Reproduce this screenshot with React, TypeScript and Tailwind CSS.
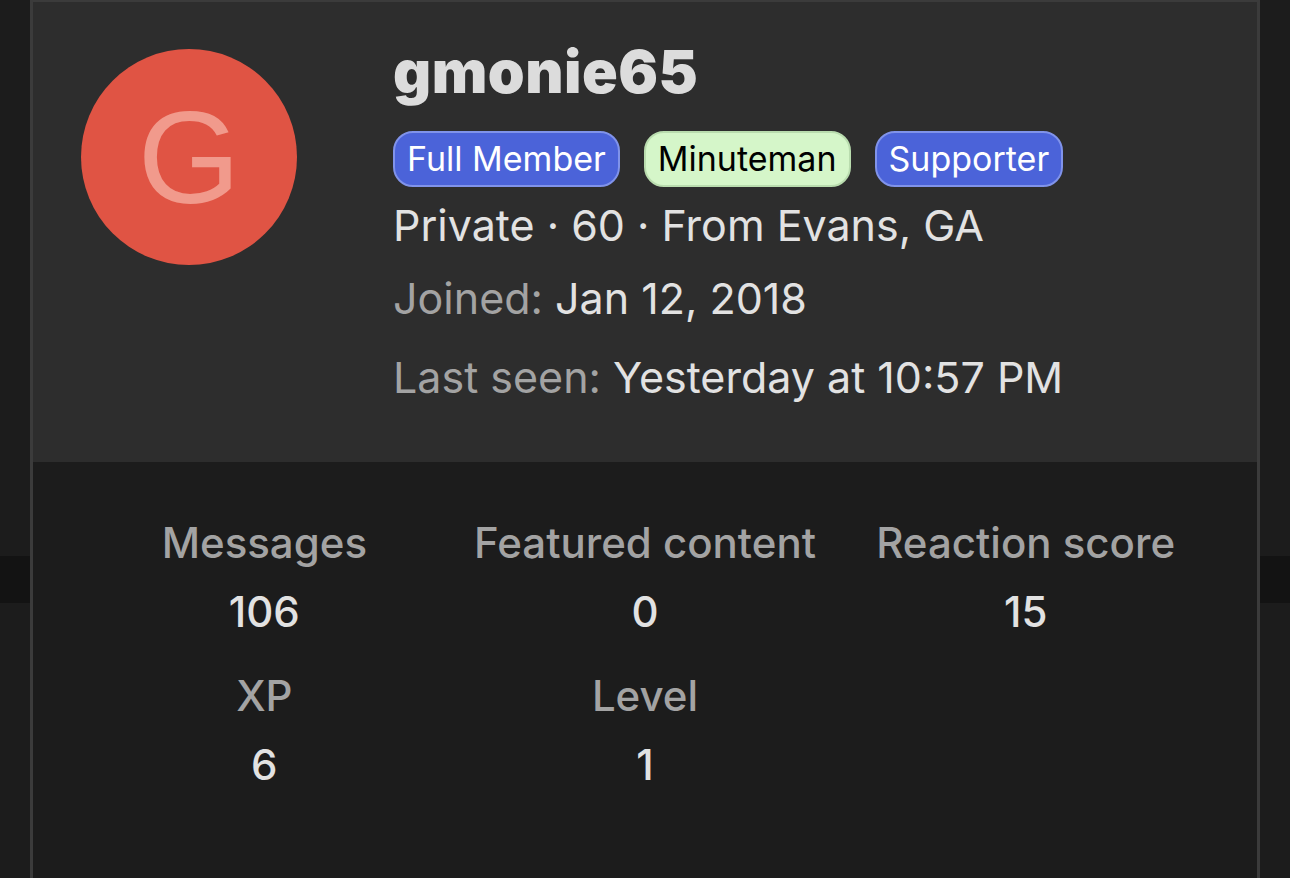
const stats = [
  { label: "Messages", value: "106" },
  { label: "Featured content", value: "0" },
  { label: "Reaction score", value: "15" },
  { label: "XP", value: "6" },
  { label: "Level", value: "1" },
];

function Badge({ text, tone }: { text: string; tone: "blue" | "green" }) {
  const cls =
    tone === "blue"
      ? "bg-[#4b63d9] border-[#8093ea] text-white"
      : "bg-[#d5f6c9] border-[#b9dcae] text-black";
  return (
    <span
      className={`inline-flex items-center h-[56px] px-[12px] rounded-[20px] border-2 text-[34px] leading-none ${cls}`}
    >
      {text}
    </span>
  );
}

export default function App() {
  return (
    <div className="w-[1290px] h-[878px] bg-[#1c1c1c] relative overflow-hidden font-[Inter,sans-serif]">
      {/* dark strip behind the card */}
      <div className="absolute left-0 right-0 top-[556px] h-[47px] bg-[#131313]" />

      <div className="absolute left-[30px] top-0 w-[1230px] h-[900px] border-x-[3px] border-t-2 border-[#3b3b3b] flex flex-col">
        <div className="h-[460px] bg-[#2d2d2d] flex pl-[48px] pt-[47px]">
          <div className="w-[216px] h-[216px] rounded-full bg-[#e05444] flex items-center justify-center shrink-0">
            <span className="text-[#f19a8c] text-[132px] leading-none font-['Liberation_Sans',sans-serif] mt-[2px]">
              G
            </span>
          </div>

          <div className="ml-[96px] flex flex-col">
            <div className="text-[#dcdcdc] text-[59px] font-black leading-none mt-[-7px] tracking-[0.5px]">
              gmonie65
            </div>
            <div className="flex gap-[24px] mt-[30px]">
              <Badge text="Full Member" tone="blue" />
              <Badge text="Minuteman" tone="green" />
              <Badge text="Supporter" tone="blue" />
            </div>
            <div className="text-[#e2e2e2] text-[43px] leading-none mt-[17px]">
              Private · 60 · From Evans, GA
            </div>
            <div className="text-[43px] leading-none mt-[30px]">
              <span className="text-[#a3a3a3]">Joined:</span>{" "}
              <span className="text-[#e2e2e2]">Jan 12, 2018</span>
            </div>
            <div className="text-[43px] leading-none mt-[36px]">
              <span className="text-[#a3a3a3]">Last seen:</span>{" "}
              <span className="text-[#e2e2e2]">Yesterday at 10:57 PM</span>
            </div>
          </div>
        </div>

        <div className="flex-1 bg-[#1c1c1c] px-[41px] pt-[60px]">
          <div className="grid grid-cols-3 gap-y-[42px]">
            {stats.map((s) => (
              <div key={s.label} className="flex flex-col items-center">
                <div className="text-[#a3a3a3] text-[42px] leading-none font-medium">
                  {s.label}
                </div>
                <div className="text-[#e2e2e2] text-[42px] leading-none font-medium mt-[27px]">
                  {s.value}
                </div>
              </div>
            ))}
          </div>
        </div>
      </div>
    </div>
  );
}
